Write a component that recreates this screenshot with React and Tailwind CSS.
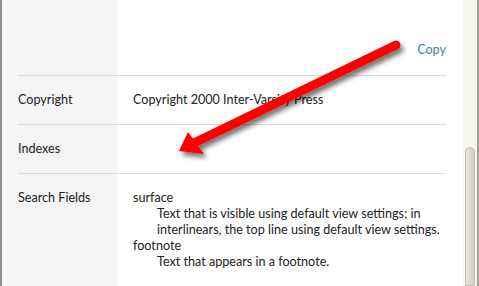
// Book properties panel with a red callout arrow over it
const Row = ({ label, children }) => {
  return (
    <div className="flex border-t border-[#dcdcdc] py-4">
      <div className="w-[115px] shrink-0">{label}</div>
      <div className="flex-1">{children}</div>
    </div>
  );
};

const Arrow = () => {
  return (
    <svg
      className="absolute left-0 top-0 pointer-events-none"
      width="479"
      height="286"
      viewBox="0 0 479 286"
    >
      <defs>
        <filter id="shadow" x="-20%" y="-20%" width="140%" height="160%">
          <feDropShadow dx="3" dy="4" stdDeviation="2.5" floodColor="#000" floodOpacity="0.55" />
        </filter>
      </defs>
      <g filter="url(#shadow)">
        <line x1="396" y1="45" x2="194" y2="143" stroke="#ff0000" strokeWidth="9" strokeLinecap="round" />
        <polygon points="179,151 188,132 204,154" fill="#ff0000" />
      </g>
    </svg>
  );
};

export default function App() {
  return (
    <div className="relative flex w-[479px] h-[286px] overflow-hidden bg-white font-['Lato',sans-serif] text-[12.6px] leading-4 text-[#222]">
      <div className="w-[2px] shrink-0 bg-[#8f8f86]" />

      <main className="flex-1 flex flex-col bg-[linear-gradient(to_right,#f4f4f4_115px,#ffffff_115px)]">
        <div className="h-[75px] shrink-0 flex items-end justify-end px-4 pb-[17px]">
          <span className="text-[#3d85a8]">Copy</span>
        </div>
        <div className="mx-4 shrink-0">
          <Row label="Copyright">Copyright 2000 Inter-Varsity Press</Row>
          <Row label="Indexes">&nbsp;</Row>
          <Row label="Search Fields">
            <div>surface</div>
            <div className="pl-6">
              Text that is visible using default view settings; in interlinears, the top line using default view settings.
            </div>
            <div>footnote</div>
            <div className="pl-6">Text that appears in a footnote.</div>
          </Row>
        </div>
      </main>

      {/* scrollbar */}
      <div className="w-[17px] shrink-0 flex flex-col bg-[#f6f5ef] border-l border-[#ffffff] border-r-2 border-r-[#a09f94]">
        <div className="h-[147px] shrink-0" />
        <div className="flex-1 mx-[2px] rounded-t-[6px] border border-[#c2c0b3] bg-[linear-gradient(to_right,#e8e6dc,#d2d0c4)]" />
      </div>

      <Arrow />
    </div>
  );
}
